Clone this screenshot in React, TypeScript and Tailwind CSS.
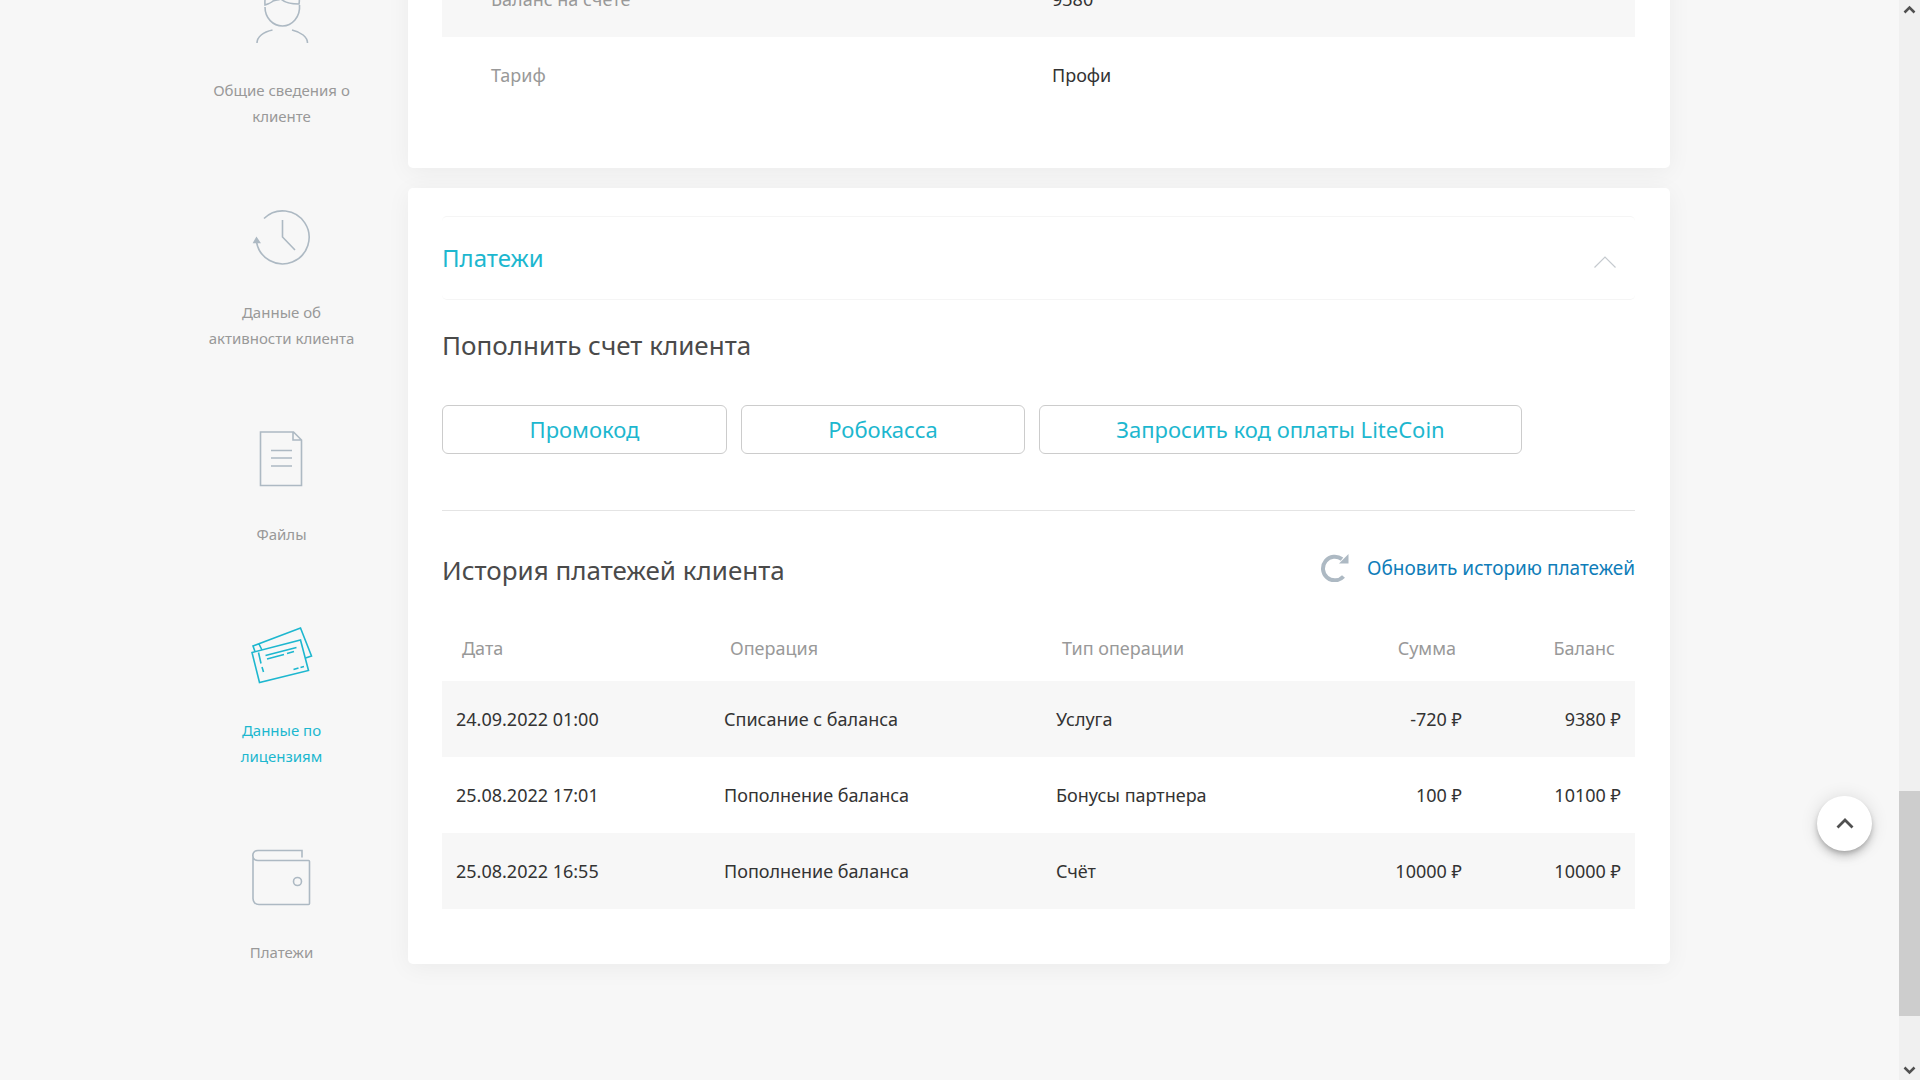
import type { ReactNode } from "react";

interface NavItem {
  label: string;
  icon: ReactNode;
  active?: boolean;
}

interface Payment {
  date: string;
  operation: string;
  type: string;
  sum: string;
  balance: string;
}

const payments: Payment[] = [
  { date: "24.09.2022 01:00", operation: "Списание с баланса", type: "Услуга", sum: "-720 ₽", balance: "9380 ₽" },
  { date: "25.08.2022 17:01", operation: "Пополнение баланса", type: "Бонусы партнера", sum: "100 ₽", balance: "10100 ₽" },
  { date: "25.08.2022 16:55", operation: "Пополнение баланса", type: "Счёт", sum: "10000 ₽", balance: "10000 ₽" },
];

function Icon({ children }: { children: ReactNode }) {
  return (
    <svg
      viewBox="1 0 62 56"
      className="h-14 w-[62px] overflow-visible"
      fill="none"
      stroke="currentColor"
      strokeWidth="1.6"
      aria-hidden="true"
    >
      {children}
    </svg>
  );
}

const navItems: NavItem[] = [
  {
    label: "Общие сведения о клиенте",
    icon: (
      <Icon>
        <path d="M15 18c-1-12 5-20 17-20s19 8 17 19c-8 0-14-1-18-5-3 1-5 1-8 2-2 2-5 3-8 4z" />
        <path d="M15 20c0 11 8 19 17.500 19s18-9 17-21" />
        <path d="M22.500 43C13 45 7 50 7 56M42 43C51 45 57.500 50 57.500 56" />
      </Icon>
    ),
  },
  {
    label: "Данные об активности клиента",
    icon: (
      <Icon>
        <path d="M14 9.500A26.500 26.500 0 1 1 6.500 33" />
        <path d="M32.500 11v17L45 41" />
        <path d="M4 33.500 6.500 29l3 4.500z" fill="currentColor" />
      </Icon>
    ),
  },
  {
    label: "Файлы",
    icon: (
      <Icon>
        <path d="M10.500 1h33l8 8v45.500h-41zM43 1v8h8" />
        <path d="M21 19.500h21M21 27h21M21 35h21" />
      </Icon>
    ),
  },
  {
    label: "Данные по лицензиям",
    active: true,
    icon: (
      <Icon>
        <path d="M2 25.500 50.500 13l8 30.500L9.500 55.500z" />
        <path d="M5 24.500 3 19 50.500 1 61.500 29l-6 2M9 17l3 6" />
        <path d="M8.500 25.500l2.500 11M12 40l1.500 5" />
        <path d="M15.500 28.500 46.500 20.500M17 32l17-4.500M37 26.500l7-2M43.500 42.500l5-1.500M50.500 40.500l3.500-1" />
      </Icon>
    ),
  },
  {
    label: "Платежи",
    icon: (
      <Icon>
        <path d="M52 8.500V1.500H8c-7 0-7 10 0 10h50.500q1 0 1 1v42q0 1-1 1H9c-4 0-6-3-6-6V6.500" />
        <circle cx="47.500" cy="32.500" r="4" />
      </Icon>
    ),
  },
];

function Sidebar() {
  return (
    <nav className="-mt-[13px] w-[207px] shrink-0">
      <ul className="flex flex-col gap-20">
        {navItems.map((item) => (
          <li key={item.label}>
            <a
              href="#"
              className={`flex flex-col items-center gap-[34px] ${item.active ? "text-[#1db7cf]" : "text-[#adb9c3]"}`}
            >
              {item.icon}
              <span
                className={`w-[152px] text-center text-[15px] leading-[26px] ${item.active ? "text-[#1db7cf]" : "text-[#999]"}`}
              >
                {item.label}
              </span>
            </a>
          </li>
        ))}
      </ul>
    </nav>
  );
}

function InfoRow({ label, value, shaded }: { label: string; value: string; shaded?: boolean }) {
  return (
    <div className={`flex h-[76px] items-center px-[49px] ${shaded ? "bg-[#f7f7f7]" : ""}`}>
      <dt className="w-[561px] text-[#999]">{label}</dt>
      <dd>{value}</dd>
    </div>
  );
}

function Card({ children, className }: { children: ReactNode; className?: string }) {
  return (
    <section className={`rounded-[5px] bg-white pr-[35px] pl-[34px] shadow-[0_4px_24px_rgba(0,0,0,0.05)] ${className ?? ""}`}>
      {children}
    </section>
  );
}

function PayButton({ children, className }: { children: ReactNode; className: string }) {
  return (
    <button
      type="button"
      className={`h-[49px] rounded-md border border-[#ccc] bg-white text-[22px] text-[#1db7cf] ${className}`}
    >
      {children}
    </button>
  );
}

function PaymentsTable() {
  return (
    <table className="mt-[26px] w-full table-fixed">
      <thead>
        <tr className="h-[67px] text-left text-[#999]">
          <th className="w-[268px] px-5 font-normal">Дата</th>
          <th className="w-[332px] px-5 font-normal">Операция</th>
          <th className="px-5 font-normal">Тип операции</th>
          <th className="w-[160px] px-5 text-right font-normal">Сумма</th>
          <th className="w-[159px] px-5 text-right font-normal">Баланс</th>
        </tr>
      </thead>
      <tbody>
        {payments.map((payment) => (
          <tr key={payment.date} className="h-[76px] odd:bg-[#f7f7f7]">
            <td className="px-3.5">{payment.date}</td>
            <td className="px-3.5">{payment.operation}</td>
            <td className="px-3.5">{payment.type}</td>
            <td className="px-3.5 text-right">{payment.sum}</td>
            <td className="px-3.5 text-right">{payment.balance}</td>
          </tr>
        ))}
      </tbody>
    </table>
  );
}

function ScrollTrack() {
  return (
    <div className="flex w-[21px] shrink-0 flex-col items-center bg-[#f0f0f0] text-[#505050]">
      <svg viewBox="0 0 21 21" className="size-[21px]" fill="none" stroke="currentColor" strokeWidth="2.500">
        <path d="M5.500 12.500 10.500 7.500l5 5" />
      </svg>
      <div className="grow-[770]" />
      <div className="w-full grow-[225] bg-[#cdcdcd]" />
      <div className="grow-[43]" />
      <svg viewBox="0 0 21 21" className="size-[21px]" fill="none" stroke="currentColor" strokeWidth="2.500">
        <path d="M5.500 8.500 10.500 13.500l5-5" />
      </svg>
    </div>
  );
}

export default function App() {
  return (
    <div className="flex h-screen overflow-hidden bg-[#f7f7f7] font-['Noto_Sans',sans-serif] text-lg text-[#333]">
      <div className="min-w-0 flex-1">
        <div className="mx-auto flex max-w-[1543px] pr-[51px]">
          <Sidebar />
          <main className="ml-[23px] flex min-w-0 flex-1 flex-col gap-5">
            <Card className="-mt-[39px] pb-[55px]">
              <dl>
                <InfoRow label="Баланс на счете" value="9380" shaded />
                <InfoRow label="Тариф" value="Профи" />
              </dl>
            </Card>

            <Card className="pt-7 pb-[55px]">
              <div className="flex items-end justify-between rounded-[5px] border-y border-[#f5f5f5] py-[23px] pr-[19px]">
                <h2 className="text-2xl leading-9 text-[#1db7cf]">Платежи</h2>
                <button type="button" aria-label="Свернуть" className="pb-2 text-[#c5cacf]">
                  <svg viewBox="0 0 22 12" className="h-3 w-[22px]" fill="none" stroke="currentColor" strokeWidth="1.200">
                    <path d="M.5 11.500 11 1l10.500 10.500" />
                  </svg>
                </button>
              </div>

              <h3 className="mt-[27px] text-[26px] leading-9 text-[#4a4a4a]">Пополнить счет клиента</h3>
              <div className="mt-[42px] flex gap-3.5">
                <PayButton className="w-[285px]">Промокод</PayButton>
                <PayButton className="w-[284px]">Робокасса</PayButton>
                <PayButton className="w-[483px]">Запросить код оплаты LiteCoin</PayButton>
              </div>

              <hr className="mt-14 border-[#e4e4e4]" />

              <div className="mt-[41px] flex items-start justify-between">
                <h3 className="text-[26px] leading-9 text-[#4a4a4a]">История платежей клиента</h3>
                <a href="#" className="flex items-center gap-[18px] text-[19px] leading-8 text-[#0f7db9]">
                  <svg viewBox="0 0 29 28" className="h-7 w-[29px] text-[#adb9c3]" aria-hidden="true">
                    <path d="M23.500 22.500A11.800 11.800 0 1 1 22 5.200" fill="none" stroke="currentColor" strokeWidth="4" />
                    <path d="M28.500 0v9.500H19z" fill="currentColor" />
                  </svg>
                  Обновить историю платежей
                </a>
              </div>

              <PaymentsTable />
            </Card>
          </main>
        </div>
      </div>
      <ScrollTrack />

      <button
        type="button"
        aria-label="Наверх"
        className="fixed right-12 bottom-[229px] flex size-[55px] items-center justify-center rounded-full bg-white text-[#505050] shadow-[0_3px_5px_-1px_rgba(0,0,0,0.2),0_6px_10px_rgba(0,0,0,0.14),0_1px_18px_rgba(0,0,0,0.12)]"
      >
        <svg viewBox="0 0 18 11" className="h-[11px] w-[18px]" fill="none" stroke="currentColor" strokeWidth="2.800">
          <path d="M1.500 9.500 9 2l7.500 7.500" />
        </svg>
      </button>
    </div>
  );
}
